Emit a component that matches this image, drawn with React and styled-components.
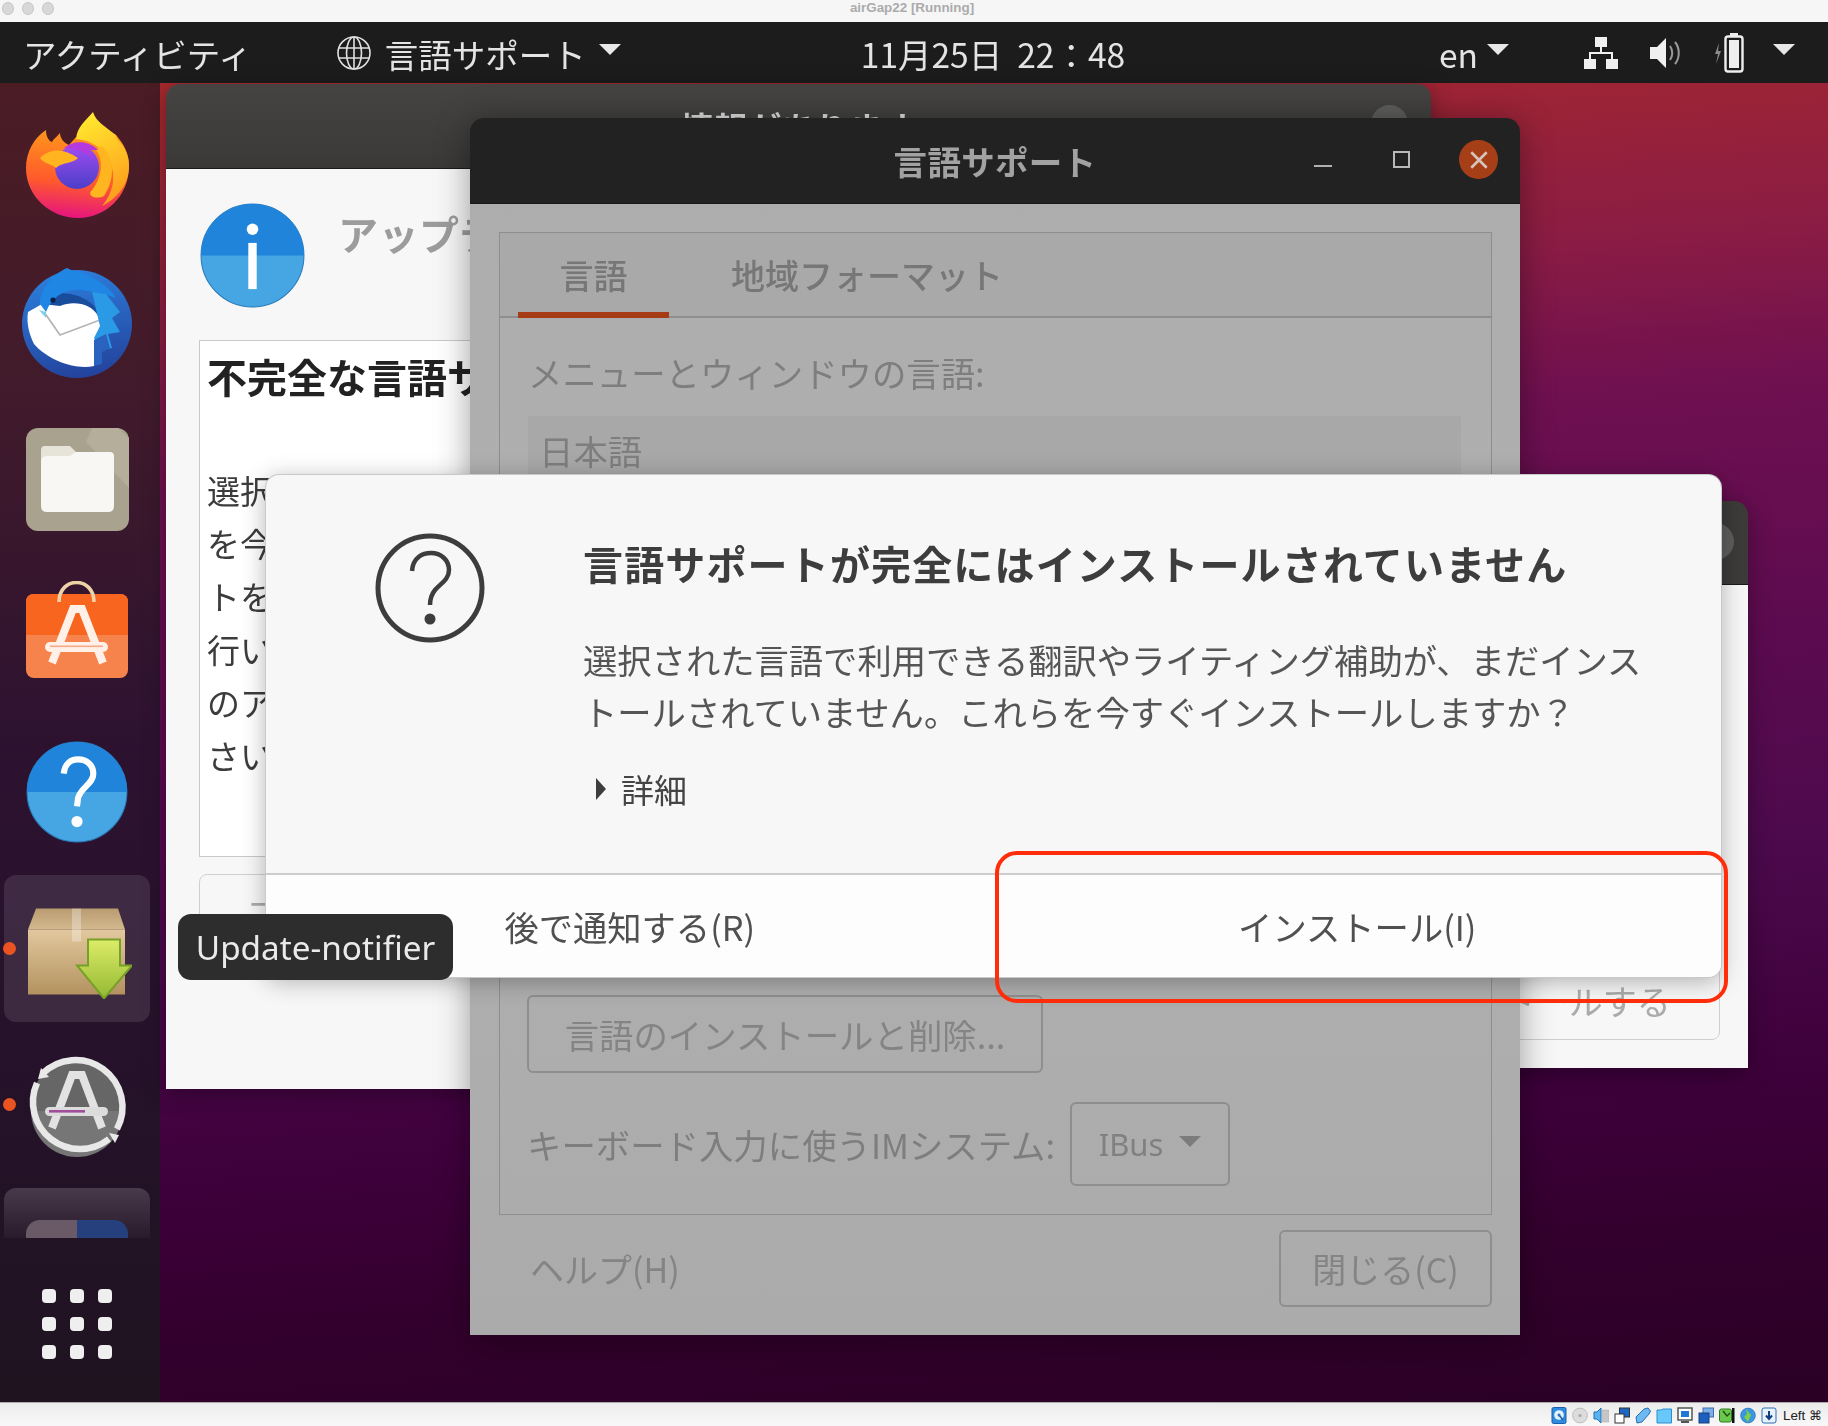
import React from 'react'
import styled, { createGlobalStyle } from 'styled-components'

const Global = createGlobalStyle`
html, body { margin: 0; padding: 0; background: #2a0025; }
* { box-sizing: border-box; }
`

const CJK = `"Noto Sans CJK JP", "Noto Sans", sans-serif`

const Screen = styled.div`
position: relative;
width: 1828px;
height: 1426px;
overflow: hidden;
display: flex;
flex-direction: column;
font-family: ${CJK};
`

const MacBar = styled.div`
height: 22px;
flex: none;
background: #f6f6f6;
position: relative;
display: flex;
justify-content: center;
`
const Lights = styled.div`
position: absolute;
left: 2px;
top: 2px;
display: flex;
gap: 8px;
`
const Light = styled.span`
width: 12px;
height: 13px;
border-radius: 50%;
background: #d8d8d8;
border: 1px solid #c6c6c6;
`
const MacTitle = styled.span`
font: 600 13.4px/15px "Liberation Sans", sans-serif;
color: #ababab;
margin-left: -4px;
`

const Guest = styled.div`
position: relative;
flex: 1;
display: flex;
flex-direction: column;
overflow: hidden;
filter: blur(0.6px);
background: linear-gradient(176deg, #a8292c 5%, #8a1c44 22%, #6f1050 32%, #5c0b50 49%, #4c0a4c 63%, #3e003b 78%, #33002d 88%, #2a0025 100%);
`

const TopBar = styled.header`
height: 61px;
flex: none;
background: #1c1c1c;
color: #e4e4e4;
display: flex;
align-items: center;
font-size: 33.5px;
padding-left: 23px;
white-space: nowrap;
`
const TopItem = styled.div`
display: flex;
align-items: center;
margin-left: ${p => p.$ml || 0}px;
gap: ${p => p.$gap || 0}px;
`
const TopLabel = styled.span`
line-height: 61px;
padding-top: 2px;
`
const Caret = styled.span`
width: 0;
height: 0;
border-left: 11px solid transparent;
border-right: 11px solid transparent;
border-top: 11px solid ${p => p.$color || '#e8e8e8'};
margin-top: -6px;
`

const Desk = styled.div`
flex: 1;
display: flex;
min-height: 0;
`
const Dock = styled.aside`
width: 160px;
flex: none;
display: flex;
flex-direction: column;
background: linear-gradient(180deg, #4b1c24 0%, #421b2b 22%, #2d1230 50%, #25122a 75%, #1f1320 100%);
`
const DockList = styled.div`
height: 1155px;
flex: none;
overflow: hidden;
display: flex;
flex-direction: column;
gap: 9.4px;
padding: 10px 0 0 4px;
`
const Tile = styled.div`
position: relative;
flex: none;
width: 146px;
height: 147px;
border-radius: 12px;
display: flex;
align-items: center;
justify-content: center;
padding-bottom: ${p => p.$up || 0}px;
background: ${p => p.$active ? 'rgba(255,255,255,0.1)' : 'transparent'};
`
const FadeTile = styled(Tile)`
align-items: flex-start;
padding-top: 32px;
background: linear-gradient(180deg, rgba(255,255,255,0.17), rgba(255,255,255,0.03) 50px);
`
const StubIcon = styled.div`
width: 102px;
height: 60px;
border-radius: 14px 14px 0 0;
background: linear-gradient(90deg, #6a5a68 50%, #25407c 50%);
`
const RunDot = styled.span`
position: absolute;
left: -1px;
top: 67px;
width: 13px;
height: 13px;
border-radius: 50%;
background: #e95420;
`
const ShowApps = styled.div`
flex: 1;
display: flex;
align-items: center;
justify-content: center;
padding: 8px 6px 0 0;
`
const AppsGrid = styled.div`
display: grid;
grid-template-columns: repeat(3, 14px);
grid-auto-rows: 14px;
column-gap: 14px;
row-gap: 14px;
`
const AppsDot = styled.span`
background: #efefef;
border-radius: 4px;
`

const Win = styled.section`
position: absolute;
left: ${p => p.$x}px;
top: ${p => p.$y}px;
width: ${p => p.$w}px;
height: ${p => p.$h}px;
display: flex;
flex-direction: column;
border-radius: 14px 14px 0 0;
overflow: hidden;
box-shadow: ${p => p.$shadow || 'none'};
`
const WinHead = styled.div`
position: relative;
flex: none;
height: ${p => p.$h}px;
background: ${p => p.$bg};
color: ${p => p.$color};
font-size: 33.5px;
font-weight: 700;
display: flex;
align-items: center;
justify-content: center;
letter-spacing: 0.3px;
border-bottom: 1px solid #1a1a1a;
`
const WinBody = styled.div`
flex: 1;
min-height: 0;
display: flex;
flex-direction: column;
background: ${p => p.$bg};
`
const BackClose = styled.span`
position: absolute;
width: 37px;
height: 37px;
border-radius: 50%;
background: #5d5d5b;
right: ${p => p.$right}px;
top: ${p => p.$top}px;
`

const BackIntro = styled.div`
height: 171px;
flex: none;
display: flex;
gap: 33px;
padding: 34px 0 0 34px;
`
const BackHeading = styled.div`
font-size: 40px;
color: #9c9c9c;
font-weight: 700;
line-height: 60px;
letter-spacing: 0.5px;
white-space: nowrap;
`
const BackFrame = styled.div`
margin-left: 33px;
width: 900px;
height: 517px;
flex: none;
background: #fff;
border: 1px solid #c9c9c9;
padding: 10px 7px;
color: #3c3c3c;
`
const BackTitle = styled.div`
font-size: 40px;
font-weight: 700;
line-height: 50px;
height: 113px;
color: #222;
white-space: nowrap;
`
const BackLine = styled.div`
font-size: 33px;
line-height: 53px;
white-space: nowrap;
`
const BackButton = styled.div`
margin: 17px 0 0 33px;
width: 900px;
height: 90px;
flex: none;
border: 1px solid #cfcfcf;
border-radius: 8px;
font-size: 33px;
color: #aaa;
padding-left: 50px;
line-height: 56px;
white-space: nowrap;
`

const CtlRow = styled.div`
position: absolute;
right: 22px;
top: 22px;
display: flex;
align-items: center;
`
const CtlMin = styled.span`
width: 18px;
height: 2px;
background: #b0b0b0;
margin: 12px 61px 0 0;
`
const CtlMax = styled.span`
width: 17px;
height: 17px;
border: 2px solid #b9b9b9;
margin-right: 49px;
`
const CtlClose = styled.span`
width: 39px;
height: 39px;
border-radius: 50%;
background: #a63f17;
display: flex;
align-items: center;
justify-content: center;
`

const TabFrame = styled.div`
margin: 28px 28px 0 29px;
height: 983px;
flex: none;
border: 1px solid #8e8e8e;
display: flex;
flex-direction: column;
`
const TabBar = styled.div`
height: 85px;
flex: none;
display: flex;
background: #a9a9a9;
border-bottom: 2px solid #8e8e8e;
padding-left: 18px;
`
const Tab = styled.div`
width: ${p => p.$w}px;
margin-left: ${p => p.$ml || 0}px;
height: 85px;
text-align: center;
font-size: 34px;
font-weight: 500;
line-height: 84px;
color: #777;
border-bottom: ${p => p.$on ? '6px solid #a53c16' : 'none'};
white-space: nowrap;
`
const Panel = styled.div`
padding: 32px 29px 0 27px;
display: flex;
flex-direction: column;
color: #7e7e7e;
font-size: 34.4px;
`
const PanelLabel = styled.div`
line-height: 44px;
padding-left: 1px;
white-space: nowrap;
`
const LangList = styled.div`
margin: 22px 0 0 1px;
height: 530px;
width: 933px;
background: #a8a8a8;
padding: 12px 11px;
line-height: 44px;
flex: none;
`
const DimButton = styled.div`
margin-top: 49px;
height: 78px;
width: 516px;
flex: none;
border: 2px solid #8e8e8e;
border-radius: 6px;
color: #848484;
display: flex;
align-items: center;
justify-content: center;
white-space: nowrap;
`
const ImRow = styled.div`
margin-top: 29px;
display: flex;
align-items: center;
gap: 15px;
white-space: nowrap;
`
const Combo = styled.div`
width: 160px;
height: 84px;
border: 2px solid #8e8e8e;
border-radius: 6px;
display: flex;
align-items: center;
justify-content: center;
gap: 16px;
font: 31px "Noto Sans", sans-serif;
color: #808080;
`
const LangFoot = styled.div`
margin: 15px 28px 0 60px;
display: flex;
align-items: center;
justify-content: space-between;
font-size: 34px;
color: #848484;
`
const CloseBtn = styled(DimButton)`
margin: 0;
width: 213px;
height: 77px;
`

const RightBody = styled(WinBody)`
justify-content: flex-end;
padding: 0 28px 28px 16px;
`
const RightButton = styled.div`
height: 80px;
border: 1px solid #cfcfcf;
border-radius: 8px;
font-size: 34px;
color: #ababab;
display: flex;
align-items: center;
justify-content: center;
white-space: nowrap;
padding: 1px 6px 0 0;
`

const Dialog = styled.div`
position: absolute;
left: 266px;
top: 453px;
width: 1455px;
height: 502px;
border-radius: 13px;
overflow: hidden;
display: flex;
flex-direction: column;
background: #f7f7f7;
box-shadow: 0 0 0 1px #c9c9c9, 0 4px 24px rgba(0,0,0,0.3);
`
const DialogMain = styled.div`
flex: 1;
display: flex;
padding: 58px 0 0 109px;
`
const DialogText = styled.div`
margin-left: 98px;
padding-top: 5px;
color: #555;
`
const DialogHeading = styled.h1`
margin: 0;
font-size: 40px;
font-weight: 700;
line-height: 50px;
letter-spacing: 1.15px;
color: #3d3d3d;
white-space: nowrap;
`
const DialogBody = styled.p`
margin: 45px 0 0;
font-size: 34.3px;
line-height: 52px;
white-space: pre-line;
`
const Expander = styled.div`
margin: 30px 0 0 13px;
display: flex;
align-items: center;
gap: 15px;
font-size: 33px;
line-height: 44px;
color: #444;
`
const ExpArrow = styled.span`
width: 0;
height: 0;
border-top: 11px solid transparent;
border-bottom: 11px solid transparent;
border-left: 10px solid #3d3d3d;
`
const DialogFoot = styled.div`
height: 104px;
flex: none;
display: grid;
grid-template-columns: 1fr 1fr;
background: #fdfdfd;
border-top: 2px solid #cdcdcd;
`
const DialogAction = styled.div`
display: flex;
align-items: center;
justify-content: center;
font-size: 34.3px;
color: #505050;
`

const Tooltip = styled.div`
position: absolute;
left: 178px;
top: 892px;
width: 275px;
height: 66px;
border-radius: 13px;
background: #2d2d2d;
color: #eaeaea;
font: 33.3px "Noto Sans", sans-serif;
display: flex;
align-items: center;
justify-content: center;
`

const RedBox = styled.div`
position: absolute;
left: 995px;
top: 851px;
width: 733px;
height: 152px;
border: 4.5px solid #ff2d0a;
border-radius: 22px;
pointer-events: none;
`

const StatusBar = styled.footer`
height: 24px;
flex: none;
background: linear-gradient(180deg, #ececec, #f8f8f8);
border-top: 1px solid #aaa;
display: flex;
align-items: center;
justify-content: flex-end;
gap: 5px;
padding: 2px 6px 0 0;
`
const StatusText = styled.span`
font: 13.4px "Liberation Sans", sans-serif;
color: #222;
margin-left: 1px;
white-space: nowrap;
`

const Firefox = () => (
  <svg width="103" height="106" viewBox="0 0 103 106">
    <defs>
      <linearGradient id="ffBody" x1="0.6" y1="0" x2="0.5" y2="1">
        <stop offset="0" stopColor="#ff9a1a" />
        <stop offset="0.6" stopColor="#ff5a2c" />
        <stop offset="1" stopColor="#e6157e" />
      </linearGradient>
      <linearGradient id="ffFlame" x1="0.3" y1="0" x2="0.6" y2="1">
        <stop offset="0" stopColor="#ffe92e" />
        <stop offset="1" stopColor="#ff9a1c" />
      </linearGradient>
      <linearGradient id="ffGlobe" x1="0.5" y1="0" x2="0.5" y2="1">
        <stop offset="0" stopColor="#a34cf2" />
        <stop offset="1" stopColor="#4a3ec8" />
      </linearGradient>
    </defs>
    <path d="M0 56 C0 40 8 26 20 18 C20 25 23 29 26 30 C28 26 32 24 34 21 C34 26 38 31 43 33 L50 25 L90 23 C98 32 103 42 103 54 C103 84 80 106 52 106 C24 106 0 84 0 56 Z" fill="url(#ffBody)" />
    <path d="M50 27 C51 15 60 8 67 0 C70 10 80 15 90 23 L91 27 C100 36 103 44 103 54 C103 72 92 86 76 94 C88 80 90 64 84 50 C78 36 64 28 50 27 Z" fill="url(#ffFlame)" />
    <path d="M76 34 C88 46 90 66 78 84 C70 88 60 84 66 78 C76 66 78 48 70 38 Z" fill="#ffb51f" />
    <circle cx="51" cy="55" r="22" fill="url(#ffGlobe)" />
    <path d="M38 36 C48 28 62 28 72 38 L62 38 C64 42 68 46 70 50 C64 42 52 36 38 36 Z" fill="#b43ae0" />
    <path d="M14 46 C24 36 38 36 52 46 C46 52 36 50 30 56 C26 52 18 52 14 46 Z" fill="#ffb420" />
  </svg>
)

const Thunderbird = () => (
  <svg width="110" height="110" viewBox="0 0 110 110">
    <defs>
      <linearGradient id="tbBlue" x1="0.4" y1="0" x2="0.6" y2="1">
        <stop offset="0" stopColor="#2c7fdc" />
        <stop offset="1" stopColor="#23429c" />
      </linearGradient>
    </defs>
    <ellipse cx="55" cy="56" rx="55" ry="54" fill="url(#tbBlue)" />
    <path d="M18 40 L24 30 C34 22 58 24 72 38 L84 56 L72 60 Z" fill="#1a4c9c" />
    <path d="M6 44 L20 36 L38 38 C52 32 70 36 76 48 L82 72 L74 82 L72 98 C52 102 26 92 12 76 C8 68 4 56 6 44 Z" fill="#fff" />
    <path d="M22 44 L38 67 L78 52" fill="none" stroke="#b5b5b5" strokeWidth="1.8" />
    <path d="M18 32 C22 14 36 4 45 0 L49 2 C66 6 84 14 94 30 C84 26 70 24 60 22 C44 20 30 28 24 44 L18 36 Z" fill="#1f86e4" />
    <path d="M70 24 L84 26 L98 44 L90 50 L98 64 L86 66 L90 80 L78 82 L72 70 L78 58 Z" fill="#2a9ae6" />
    <path d="M72 72 L84 66 L88 80 L80 84 L80 96 L72 98 Z" fill="#2a62c0" />
    <circle cx="31" cy="32" r="2.6" fill="#0b2244" />
    <path d="M17 42 L24 44 L24 50 Z" fill="#7ed0e8" />
  </svg>
)

const Files = () => (
  <svg width="103" height="103" viewBox="0 0 103 103">
    <rect width="103" height="103" rx="12" fill="#a9a28e" />
    <path d="M103 10 L103 60 L60 14 L66 0 L92 0 Z" fill="#b5ae9b" />
    <path d="M15 22 Q15 18 19 18 L44 18 L50 24 L84 24 Q88 24 88 28 L88 40 L15 40 Z" fill="#e6e3d8" />
    <path d="M15 34 Q15 28 21 28 L44 28 L50 24 L84 24 Q88 24 88 30 L88 78 Q88 84 82 84 L21 84 Q15 84 15 78 Z" fill="#f8f7f3" />
  </svg>
)

const Software = () => (
  <svg width="102" height="98" viewBox="0 0 102 98">
    <rect y="13" width="102" height="84" rx="8" fill="#f6834c" />
    <path d="M0 54 L0 21 Q0 13 8 13 L94 13 Q102 13 102 21 L102 54 Z" fill="#f7651f" />
    <path d="M33 21 C33 -5 68 -5 68 21" fill="none" stroke="#eed2a6" strokeWidth="3.6" />
    <path d="M26 82 L47 28 L56 28 L77 82" fill="none" stroke="#fff1e8" strokeWidth="8" />
    <rect x="19" y="61" width="63" height="10" rx="5" fill="#fff1e8" />
    <rect x="24" y="64.5" width="53" height="1.6" fill="#f7a98a" />
  </svg>
)

const BlueDisc = ({ size, children }) => (
  <svg width={size} height={size} viewBox="0 0 100 100">
    <ellipse cx="50" cy="50" rx="49" ry="49" fill="#46a5e3" stroke="#2a79b8" strokeWidth="1" />
    <path d="M1 50 A49 49 0 0 1 99 50 Z" fill="#1f84da" />
    {children}
  </svg>
)

const UpdateBox = () => (
  <svg width="110" height="102" viewBox="0 0 110 102">
    <defs>
      <linearGradient id="boxFront" x1="0" y1="0" x2="0" y2="1">
        <stop offset="0" stopColor="#e2c89e" />
        <stop offset="1" stopColor="#b3925f" />
      </linearGradient>
      <linearGradient id="boxLid" x1="0" y1="0" x2="0" y2="1">
        <stop offset="0" stopColor="#b99b70" />
        <stop offset="1" stopColor="#d4b98e" />
      </linearGradient>
      <linearGradient id="boxArrow" x1="0" y1="0" x2="0" y2="1">
        <stop offset="0" stopColor="#dcec68" />
        <stop offset="1" stopColor="#94b832" />
      </linearGradient>
    </defs>
    <g transform="translate(6 11.5)">
      <path d="M8 0 L90 0 L97 21 L0 21 Z" fill="url(#boxLid)" />
      <rect x="0" y="21" width="97" height="65" fill="url(#boxFront)" />
      <rect x="44" y="0" width="9" height="33" fill="#fff" fillOpacity="0.3" />
      <path d="M60 31 L92 31 L92 57 L104 57 L76 90 L49 57 L60 57 Z" fill="url(#boxArrow)" stroke="#76a028" strokeWidth="2" />
    </g>
  </svg>
)

const Updater = () => (
  <svg width="104" height="104" viewBox="0 0 104 104">
    <circle cx="52" cy="52" r="46" fill="#666" />
    <path d="M6 58 H98 A46 46 0 0 1 6 58 Z" fill="#767676" />
    <path d="M17 21 A47 47 0 0 1 92 76" fill="none" stroke="#e8e8e8" strokeWidth="6.5" />
    <path d="M84 86 A47 47 0 0 1 12 30" fill="none" stroke="#e8e8e8" strokeWidth="6.5" />
    <path d="M16 15 L24 24 L13 26 Z M94 82 L84 80 L90 90 Z" fill="#e8e8e8" />
    <path d="M27 75 L47 22 L57 22 L77 75" fill="none" stroke="#e2e2e2" strokeWidth="8" />
    <rect x="20" y="54" width="63" height="9" rx="4.5" fill="#dcdcdc" />
    <rect x="24" y="57" width="36" height="2.6" fill="#a04e9c" />
  </svg>
)

const Question = () => (
  <svg width="110" height="110" viewBox="0 0 110 110">
    <circle cx="55" cy="55" r="52" fill="none" stroke="#3d3d3d" strokeWidth="5" />
    <path d="M37 38 C38 24 48 20 56 20 C66 20 74 27 74 37 C74 47 65 51 60 57 C56 62 55 66 55 72" fill="none" stroke="#3d3d3d" strokeWidth="4.5" />
    <circle cx="55" cy="86" r="5.5" fill="#3d3d3d" />
  </svg>
)

const Globe = () => (
  <svg width="36" height="36" viewBox="0 0 36 36" fill="none" stroke="#e0e0e0" strokeWidth="1.6">
    <circle cx="18" cy="18" r="16" />
    <ellipse cx="18" cy="18" rx="7.5" ry="16" />
    <path d="M18 2 V34 M2.5 13 H33.5 M2.5 23 H33.5" />
  </svg>
)

const Network = () => (
  <svg width="36" height="36" viewBox="0 0 36 36" fill="#f0f0f0">
    <rect x="12" y="2" width="12" height="10" />
    <rect x="1" y="24" width="12" height="10" />
    <rect x="23" y="24" width="12" height="10" />
    <path d="M17 12 H19 V17 H30 V24 H28 V19 H8 V24 H6 V17 H17 Z" />
  </svg>
)

const Speaker = () => (
  <svg width="34" height="36" viewBox="0 0 34 36">
    <path d="M1 12 H8 L17 3 V33 L8 24 H1 Z" fill="#f0f0f0" />
    <path d="M21 11 C24 15 24 21 21 25 M26 7 C31 13 31 23 26 29" fill="none" stroke="#9a9a9a" strokeWidth="2" />
  </svg>
)

const Battery = () => (
  <svg width="36" height="40" viewBox="0 0 36 40">
    <path d="M6 10 L2 21 H5 L3 31 L8 18 H5 Z" fill="#8a8a8a" />
    <rect x="17" y="0" width="8" height="4" fill="#eee" />
    <rect x="12.5" y="3.5" width="17" height="35" rx="2.5" fill="none" stroke="#eee" strokeWidth="2.4" />
    <rect x="16" y="7" width="10" height="28" fill="#eee" />
  </svg>
)

const CloseX = ({ stroke, size }) => (
  <svg width={size} height={size} viewBox="0 0 20 20">
    <path d="M3 3 L17 17 M17 3 L3 17" stroke={stroke} strokeWidth="2.4" />
  </svg>
)

const tray = [
  <g key="a"><rect x="1" y="0.5" width="14" height="16" rx="1.5" fill="#2e8be0" stroke="#1b5fa8" /><circle cx="8" cy="8" r="4.8" fill="#e4f2fc" /><path d="M8 8 L12 13" stroke="#1b5fa8" strokeWidth="1.6" /><circle cx="8" cy="8" r="1.5" fill="#2e6fb8" /></g>,
  <g key="b"><circle cx="8" cy="8.5" r="7.4" fill="#dcdcdc" stroke="#bdbdbd" /><circle cx="8" cy="8.5" r="1.6" fill="#aaa" /></g>,
  <g key="c"><path d="M1 5 H4 L8 1 V16 L4 12 H1 Z" fill="#5ab2ee" stroke="#1f6fb8" /><rect x="9.5" y="3" width="6.5" height="12" fill="#c6c6c6" stroke="#a8a8a8" strokeWidth="0.5" /></g>,
  <g key="d"><rect x="5.5" y="1" width="10" height="9" fill="#1d67c4" stroke="#333" /><rect x="1" y="7" width="9" height="9" fill="#fff" stroke="#333" /></g>,
  <g key="e"><path d="M2 16 L1 10 L9 2 L13 1 L15.5 4 L14 7 L7 15 Z" fill="#6cb8f0" stroke="#2a6fb5" /></g>,
  <g key="f"><path d="M1 3 L1 16 H15.5 V2 H7 L5 3 Z" fill="#68c8fb" stroke="#2b8ed0" /></g>,
  <g key="g"><rect x="1" y="1" width="14" height="12" fill="#fff" stroke="#555" strokeWidth="1.5" /><rect x="4" y="4" width="8" height="6" fill="#1d78d8" /><rect x="4" y="14" width="8" height="2" fill="#555" /></g>,
  <g key="h"><rect x="5" y="1" width="10.5" height="9" fill="#7caee8" stroke="#3d6eb0" /><rect x="1" y="6" width="10" height="10" fill="#1d5fc0" stroke="#18407c" /></g>,
  <g key="i"><rect x="0.5" y="2" width="12" height="13" rx="2" fill="#6cc84c" stroke="#2d7a20" /><path d="M4 4 L8 9 L11 6" fill="none" stroke="#1c4e14" strokeWidth="1.3" /><rect x="13" y="1" width="2.5" height="15" fill="#111" /></g>,
  <g key="j"><circle cx="8" cy="8.5" r="7.4" fill="#3b95e0" stroke="#1f6fb8" strokeWidth="0.6" /><path d="M6 2 L11 8 L8 15 L4 10 L7 7 Z" fill="#7ed04a" /></g>,
  <g key="k"><rect x="1" y="1" width="14" height="15" rx="2" fill="#e8f2fc" stroke="#2a6fb5" /><path d="M8 4 V11 M5 8.5 L8 12 L11 8.5" fill="none" stroke="#123f80" strokeWidth="2" /></g>,
]

const backLines = ['選択された', 'を今', 'トを', '行い', 'のア', 'さい']

export default function App() {
  return (
    <Screen>
      <Global />
      <MacBar>
        <Lights><Light /><Light /><Light /></Lights>
        <MacTitle>airGap22 [Running]</MacTitle>
      </MacBar>

      <Guest>
        <TopBar>
          <TopLabel>アクティビティ</TopLabel>
          <TopItem $ml={84} $gap={13}>
            <Globe />
            <TopLabel>言語サポート</TopLabel>
            <Caret />
          </TopItem>
          <TopItem $ml={240}>
            <TopLabel>11月25日&nbsp;&nbsp;22：48</TopLabel>
          </TopItem>
          <TopItem $ml={314} $gap={9}>
            <TopLabel>en</TopLabel>
            <Caret />
          </TopItem>
          <TopItem $ml={74}><Network /></TopItem>
          <TopItem $ml={30}><Speaker /></TopItem>
          <TopItem $ml={30}><Battery /></TopItem>
          <TopItem $ml={24}><Caret /></TopItem>
        </TopBar>

        <Desk>
          <Dock>
            <DockList>
              <Tile $up={3}><Firefox /></Tile>
              <Tile><Thunderbird /></Tile>
              <Tile><Files /></Tile>
              <Tile $up={12}><Software /></Tile>
              <Tile><BlueDisc size={102}>
                <path d="M37 32 C38 22 44 18 51 18 C60 18 66 24 66 32 C66 42 54 45 51 56 L50 64" fill="none" stroke="#fff" strokeWidth="6" />
                <circle cx="50" cy="79" r="5.5" fill="#fff" />
              </BlueDisc></Tile>
              <Tile $active><RunDot /><UpdateBox /></Tile>
              <Tile><RunDot /><Updater /></Tile>
              <FadeTile><StubIcon /></FadeTile>
            </DockList>
            <ShowApps>
              <AppsGrid>
                {Array.from({ length: 9 }).map((_, i) => <AppsDot key={i} />)}
              </AppsGrid>
            </ShowApps>
          </Dock>
        </Desk>

        <Win $x={1340} $y={479} $w={408} $h={567} $shadow="0 6px 24px rgba(0,0,0,0.35)">
          <WinHead $h={84} $bg="#3c3b39" $color="#ddd">
            <BackClose $right={14} $top={22} />
          </WinHead>
          <RightBody $bg="#f7f7f7">
            <RightButton>インストールする</RightButton>
          </RightBody>
        </Win>

        <Win $x={166} $y={62} $w={1265} $h={1005} $shadow="0 4px 22px rgba(0,0,0,0.35)">
          <WinHead $h={85} $bg="linear-gradient(180deg, #454442, #3a3937)" $color="#ddd">
            情報があります
            <BackClose $right={23} $top={21} />
          </WinHead>
          <WinBody $bg="#f7f7f7">
            <BackIntro>
              <BlueDisc size={105}>
                <circle cx="50" cy="25" r="5.5" fill="#fff" />
                <rect x="46" y="38" width="8" height="44" fill="#fff" />
              </BlueDisc>
              <BackHeading>アップデート情報</BackHeading>
            </BackIntro>
            <BackFrame>
              <BackTitle>不完全な言語サポート</BackTitle>
              {backLines.map(line => <BackLine key={line}>{line}</BackLine>)}
            </BackFrame>
            <BackButton>一部</BackButton>
          </WinBody>
        </Win>

        <Win $x={470} $y={96} $w={1050} $h={1217} $shadow="0 4px 34px rgba(0,0,0,0.38)">
          <WinHead $h={86} $bg="#232222" $color="#a2a2a2">
            言語サポート
            <CtlRow>
              <CtlMin />
              <CtlMax />
              <CtlClose><CloseX stroke="#d8c4ba" size={22} /></CtlClose>
            </CtlRow>
          </WinHead>
          <WinBody $bg="linear-gradient(180deg, #adadad, #b0b0b0 40%, #ababab)">
            <TabFrame>
              <TabBar>
                <Tab $w={151} $on>言語</Tab>
                <Tab $w={272} $ml={62}>地域フォーマット</Tab>
              </TabBar>
              <Panel>
                <PanelLabel>メニューとウィンドウの言語:</PanelLabel>
                <LangList>日本語</LangList>
                <DimButton>言語のインストールと削除...</DimButton>
                <ImRow>
                  <span>キーボード入力に使うIMシステム:</span>
                  <Combo>IBus<Caret $color="#7c7c7c" /></Combo>
                </ImRow>
              </Panel>
            </TabFrame>
            <LangFoot>
              <span>ヘルプ(H)</span>
              <CloseBtn>閉じる(C)</CloseBtn>
            </LangFoot>
          </WinBody>
        </Win>

        <Dialog>
          <DialogMain>
            <Question />
            <DialogText>
              <DialogHeading>言語サポートが完全にはインストールされていません</DialogHeading>
              <DialogBody>{'選択された言語で利用できる翻訳やライティング補助が、まだインス\nトールされていません。これらを今すぐインストールしますか？'}</DialogBody>
              <Expander><ExpArrow />詳細</Expander>
            </DialogText>
          </DialogMain>
          <DialogFoot>
            <DialogAction>後で通知する(R)</DialogAction>
            <DialogAction>インストール(I)</DialogAction>
          </DialogFoot>
        </Dialog>

        <Tooltip>Update-notifier</Tooltip>
      </Guest>

      <RedBox />

      <StatusBar>
        {tray.map((icon, i) => (
          <svg key={i} width="16" height="17" viewBox="0 0 16 17">{icon}</svg>
        ))}
        <StatusText>Left ⌘</StatusText>
      </StatusBar>
    </Screen>
  )
}
